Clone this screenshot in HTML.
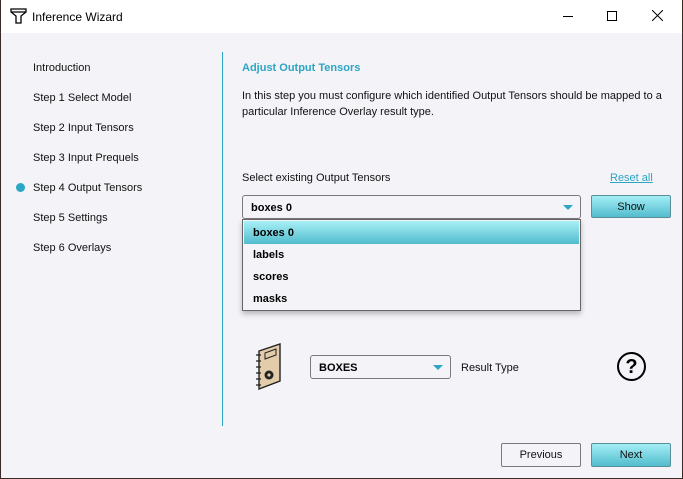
<html><head><style>
body{margin:0;width:683px;height:479px;background:#3a2a28;font-family:"Liberation Sans",sans-serif;position:relative;overflow:hidden}
.win{position:absolute;left:1px;top:0;width:681px;height:478px;background:#f4f3f8}
.tb{position:absolute;left:0;top:0;width:681px;height:33px;background:#fff;font-size:12px}
.a{position:absolute;font-size:11px;color:#111;white-space:nowrap}
.b{font-weight:bold}
.btn{position:absolute;border:1px solid #7a7a7a;border-radius:2px;font-size:11px;text-align:center;box-sizing:border-box;color:#111}
.cy{background:linear-gradient(#a4eef6,#52bccd);border-color:#5a8e98}
.cb{position:absolute;background:#f4f3f8;border:1px solid #7a7a7a;border-radius:3px;box-sizing:border-box;font-size:11px;font-weight:bold}
.tri{position:absolute;width:0;height:0;border-left:5px solid transparent;border-right:5px solid transparent;border-top:5px solid #2ba6c4}
</style></head><body><div class="win">
<div class="tb">
<svg style="position:absolute;left:9px;top:8px" width="17" height="16" viewBox="0 0 17 16"><path d="M1 1H16V4L11 8V15H6V8L1 4Z M1 4H16" fill="none" stroke="#000" stroke-width="1.3"/></svg>
<span style="position:absolute;left:31px;top:10px">Inference Wizard</span>
<div style="position:absolute;left:562px;top:16px;width:10px;height:1px;background:#000"></div>
<div style="position:absolute;left:606px;top:11px;width:8px;height:8px;border:1px solid #000"></div>
<svg style="position:absolute;left:651px;top:10px" width="11" height="11"><path d="M0 0L11 11M11 0L0 11" stroke="#000"/></svg>
</div>
<div class="a" style="left:32px;top:62px">Introduction</div>
<div class="a" style="left:32px;top:92px">Step 1 Select Model</div>
<div class="a" style="left:32px;top:122px">Step 2 Input Tensors</div>
<div class="a" style="left:32px;top:152px">Step 3 Input Prequels</div>
<div style="position:absolute;left:15px;top:183px;width:9px;height:9px;border-radius:50%;background:#2ba6c4"></div>
<div class="a" style="left:32px;top:182px">Step 4 Output Tensors</div>
<div class="a" style="left:32px;top:212px">Step 5 Settings</div>
<div class="a" style="left:32px;top:242px">Step 6 Overlays</div>
<div style="position:absolute;left:221px;top:52px;width:1px;height:374px;background:#2ba6c4"></div>
<div class="a b" style="left:241px;top:62px;color:#2ba6c4">Adjust Output Tensors</div>
<div class="a" style="left:241px;top:88px;line-height:16px">In this step you must configure which identified Output Tensors should be mapped to a<br>particular Inference Overlay result type.</div>
<div class="a" style="left:241px;top:172px">Select existing Output Tensors</div>
<div class="a" style="left:609px;top:172px;color:#2ba6c4;text-decoration:underline">Reset all</div>
<div class="cb" style="left:241px;top:195px;width:339px;height:24px;padding:6px 8px">boxes 0</div>
<div class="tri" style="left:562px;top:205px"></div>
<div class="btn cy" style="left:590px;top:195px;width:80px;height:23px;line-height:22px">Show</div>
<div style="position:absolute;left:241px;top:219px;width:339px;height:92px;background:#f4f3f8;border:1px solid #666;box-sizing:border-box;box-shadow:0 3px 5px rgba(0,0,0,.25);font-size:11px;font-weight:bold">
<div style="position:absolute;left:1px;top:1px;width:335px;height:23px;background:linear-gradient(#a8f0f6,#52bccd)"></div>
<div style="position:absolute;left:10px;top:7px">boxes 0</div>
<div style="position:absolute;left:10px;top:29px">labels</div>
<div style="position:absolute;left:10px;top:51px">scores</div>
<div style="position:absolute;left:10px;top:73px">masks</div>
</div>
<svg style="position:absolute;left:252px;top:343px" width="30" height="48" viewBox="0 0 30 48"><path d="M6 8L27 1V38L6 46Z" fill="#e2ccaa" stroke="#222" stroke-width="1.4"/><path d="M12 10L23 6V12L12 16Z" fill="none" stroke="#222"/><circle cx="16" cy="32" r="4.5" fill="#222"/><circle cx="16" cy="32" r="1.6" fill="#e2ccaa"/><path d="M3 12h5M3 18h5M3 24h5M3 30h5M3 36h5M3 42h5" stroke="#222" stroke-width="1.3"/></svg>
<div class="cb" style="left:309px;top:355px;width:141px;height:24px;padding:6px 8px;font-weight:bold">BOXES</div>
<div class="tri" style="left:432px;top:365px"></div>
<div class="a" style="left:460px;top:362px">Result Type</div>
<div style="position:absolute;left:616px;top:352px;width:25px;height:25px;border:2px solid #000;border-radius:50%;font-weight:bold;font-size:20px;text-align:center;line-height:26px">?</div>
<div class="btn" style="left:500px;top:443px;width:80px;height:24px;line-height:23px;background:#f4f3f8">Previous</div>
<div class="btn cy" style="left:590px;top:443px;width:80px;height:24px;line-height:23px">Next</div>
</div></body></html>
